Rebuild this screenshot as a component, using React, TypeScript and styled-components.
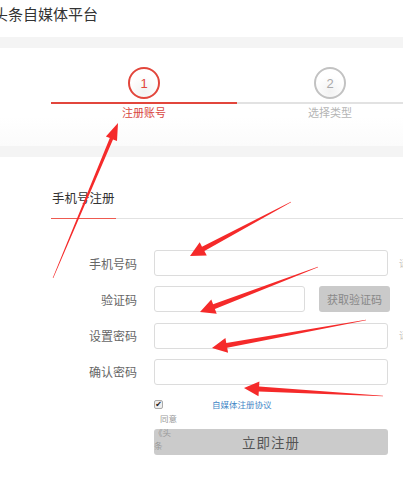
import React from 'react'
import styled, { createGlobalStyle } from 'styled-components'

const GlobalStyle = createGlobalStyle`
  html, body {
    margin: 0;
    padding: 0;
    background: #ffffff;
    overflow: hidden;
  }
  body {
    font-family: "Noto Sans CJK SC", "Noto Sans", "Liberation Sans", sans-serif;
    color: #333;
  }
`

type Pt = [number, number]

const arrowPoints = (
  tail: Pt,
  tip: Pt,
  head: number,
  wing: number,
  neckW: number,
  tailW: number,
) => {
  const dx = tip[0] - tail[0]
  const dy = tip[1] - tail[1]
  const len = Math.hypot(dx, dy)
  const ux = dx / len
  const uy = dy / len
  const px = -uy
  const py = ux
  const nx = tip[0] - ux * head
  const ny = tip[1] - uy * head
  const p = (x: number, y: number) => `${x.toFixed(1)},${y.toFixed(1)}`
  return [
    p(tail[0] + (px * tailW) / 2, tail[1] + (py * tailW) / 2),
    p(nx + (px * neckW) / 2, ny + (py * neckW) / 2),
    p(nx + px * wing, ny + py * wing),
    p(tip[0], tip[1]),
    p(nx - px * wing, ny - py * wing),
    p(nx - (px * neckW) / 2, ny - (py * neckW) / 2),
    p(tail[0] - (px * tailW) / 2, tail[1] - (py * tailW) / 2),
  ].join(' ')
}

const ARROWS: { tail: Pt; tip: Pt; head: number; wing: number; neck: number }[] = [
  { tail: [53, 278], tip: [118, 123], head: 17, wing: 6, neck: 3.5 },
  { tail: [291, 202], tip: [190, 256], head: 15, wing: 7.5, neck: 5 },
  { tail: [318, 267], tip: [200, 312], head: 15, wing: 7.5, neck: 5 },
  { tail: [366, 320], tip: [212, 348], head: 15, wing: 7.5, neck: 5 },
  { tail: [383, 396], tip: [244, 388], head: 15, wing: 7.5, neck: 5 },
]

const App = () => {
  return (
    <Page>
      <GlobalStyle />
      <Header>
        <Brand>头条自媒体平台</Brand>
      </Header>
      <Band />
      <StepSection>
        <Steps>
          <Step>
            <Circle active>1</Circle>
            <StepLine active />
            <StepLabel active>注册账号</StepLabel>
          </Step>
          <Step>
            <Circle>2</Circle>
            <StepLine />
            <StepLabel>选择类型</StepLabel>
          </Step>
        </Steps>
      </StepSection>
      <Band />
      <Card>
        <Tabs>
          <Tab>手机号注册</Tab>
        </Tabs>
        <Form>
          <Row>
            <Label>手机号码</Label>
            <Input />
            <Hint>请</Hint>
          </Row>
          <Row>
            <Label>验证码</Label>
            <Input narrow />
            <CodeButton>获取验证码</CodeButton>
          </Row>
          <Row>
            <Label>设置密码</Label>
            <Input />
            <Hint>请</Hint>
          </Row>
          <Row>
            <Label>确认密码</Label>
            <Input />
          </Row>
          <AgreeRow>
            <Label />
            <AgreeBox>
              <Check>✔</Check>
              <AgreeText>同意《头条</AgreeText>
              <AgreeLink>自媒体注册协议</AgreeLink>
            </AgreeBox>
          </AgreeRow>
          <Row>
            <Label />
            <Submit>立即注册</Submit>
          </Row>
        </Form>
      </Card>
      <Overlay width="403" height="500" viewBox="0 0 403 500">
        {ARROWS.map((a, i) => (
          <polygon
            key={i}
            points={arrowPoints(a.tail, a.tip, a.head, a.wing, a.neck, 0.6)}
            fill="#f52a2a"
          />
        ))}
      </Overlay>
    </Page>
  )
}

export default App

const Page = styled.div`
  position: relative;
  width: 403px;
  height: 500px;
  overflow: hidden;
  background: #fff;
`

const Header = styled.div`
  height: 37px;
  display: flex;
  align-items: center;
  background: #fff;
`

const Brand = styled.div`
  margin-left: -7px;
  margin-top: -11px;
  font-size: 15px;
  color: #333;
`

const Band = styled.div`
  height: 11px;
  background: #f4f4f4;
`

const StepSection = styled.div`
  height: 98px;
  background: linear-gradient(#fff 70%, #fbfbfb);
  padding-left: 51px;
`

const Steps = styled.div`
  display: flex;
  padding-top: 19px;
`

const Step = styled.div`
  width: 186px;
  flex-shrink: 0;
  display: flex;
  flex-direction: column;
  align-items: center;
`

const Circle = styled.div<{ active?: boolean }>`
  width: 28px;
  height: 28px;
  border-radius: 50%;
  border: 2.5px solid ${({ active }) => (active ? '#e2463c' : '#c2c2c2')};
  background: radial-gradient(circle at 50% 80%, #f2f2f2, #fff 60%);
  color: ${({ active }) => (active ? '#e2463c' : '#aaa')};
  font-family: "Liberation Sans", sans-serif;
  font-size: 13px;
  display: flex;
  align-items: center;
  justify-content: center;
`

const StepLine = styled.div<{ active?: boolean }>`
  align-self: stretch;
  height: 2px;
  margin-top: 3px;
  background: ${({ active }) => (active ? '#e2463c' : '#e2e2e2')};
`

const StepLabel = styled.div<{ active?: boolean }>`
  margin-top: 1px;
  font-size: 11px;
  line-height: 15px;
  color: ${({ active }) => (active ? '#d9463e' : '#b5b5b5')};
`

const Card = styled.div`
  background: #fff;
  padding-top: 32px;
`

const Tabs = styled.div`
  margin-left: 51px;
  border-bottom: 1px solid #e2e2e2;
  display: flex;
`

const Tab = styled.div`
  font-size: 12.5px;
  color: #333;
  line-height: 18px;
  padding: 0 1px 11px 1px;
  border-bottom: 1px solid #ee5a50;
  margin-bottom: -1px;
`

const Form = styled.div`
  display: flex;
  flex-direction: column;
  gap: 10.3px;
  padding-top: 31px;
  padding-left: 51px;
`

const Row = styled.div`
  display: flex;
  align-items: center;
`

const Label = styled.div`
  width: 86px;
  flex-shrink: 0;
  margin-right: 17px;
  text-align: right;
  font-size: 12px;
  color: #666;
`

const Input = styled.div<{ narrow?: boolean }>`
  width: ${({ narrow }) => (narrow ? '151px' : '234px')};
  height: 26px;
  box-sizing: border-box;
  border: 1px solid #dcdcdc;
  border-radius: 3px;
  background: #fff;
  flex-shrink: 0;
`

const Hint = styled.div`
  margin-left: 11px;
  font-size: 9px;
  color: #c4c4c4;
  white-space: nowrap;
`

const CodeButton = styled.div`
  margin-left: 14px;
  width: 71px;
  height: 26px;
  flex-shrink: 0;
  border-radius: 3px;
  background: #cacaca;
  color: #888;
  font-size: 11px;
  display: flex;
  align-items: center;
  justify-content: center;
`

const AgreeRow = styled(Row)`
  position: relative;
  align-items: flex-start;
  height: 22px;
  margin-top: 2px;
  z-index: 1;
`

const AgreeBox = styled.div`
  position: relative;
  display: flex;
  align-items: center;
  height: 14px;
`

const Check = styled.div`
  width: 9px;
  height: 9px;
  box-sizing: border-box;
  border: 1px solid #aaa;
  border-radius: 2px;
  background: #eee;
  color: #222;
  font-size: 8px;
  line-height: 8px;
  text-align: center;
  font-family: "DejaVu Sans", sans-serif;
`

const AgreeText = styled.div`
  position: absolute;
  left: 0;
  top: 15px;
  width: 24px;
  text-indent: 6px;
  font-size: 8.5px;
  line-height: 13.5px;
  color: #999;
`

const AgreeLink = styled.div`
  margin-left: 49px;
  font-size: 8.5px;
  color: #3f86c6;
`

const Submit = styled.div`
  width: 234px;
  height: 26px;
  flex-shrink: 0;
  border-radius: 3px;
  background: #cbcbcb;
  color: #555;
  font-size: 13.5px;
  letter-spacing: 1px;
  display: flex;
  align-items: center;
  justify-content: center;
`

const Overlay = styled.svg`
  position: absolute;
  left: 0;
  top: 0;
  pointer-events: none;
`
